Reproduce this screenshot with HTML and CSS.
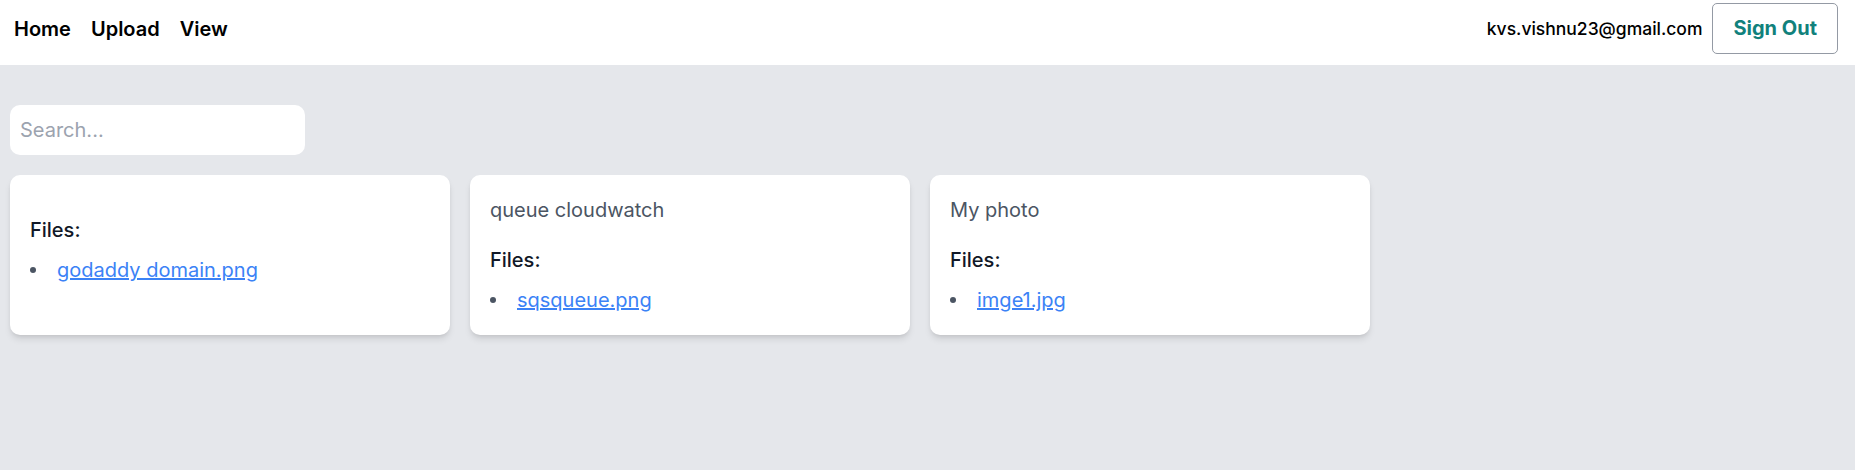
FILE: index.html
```html
<!DOCTYPE html>
<html lang="en">
<head>
<meta charset="utf-8">
<title>Files</title>
<link rel="stylesheet" href="styles.css">
</head>
<body>
<header class="topbar">
  <nav class="nav">
    <a class="nav-link" href="#">Home</a>
    <a class="nav-link" href="#">Upload</a>
    <a class="nav-link" href="#">View</a>
  </nav>
  <div class="account">
    <span class="email">kvs.vishnu23@gmail.com</span>
    <button class="signout">Sign Out</button>
  </div>
</header>
<main class="main">
  <input class="search" type="text" placeholder="Search...">
  <div class="cards">
    <div class="card">
      <p class="card-title"></p>
      <h3 class="files-label">Files:</h3>
      <ul class="file-list">
        <li class="file-item"><a class="file-link" href="#">godaddy domain.png</a></li>
      </ul>
    </div>
    <div class="card">
      <p class="card-title">queue cloudwatch</p>
      <h3 class="files-label">Files:</h3>
      <ul class="file-list">
        <li class="file-item"><a class="file-link" href="#">sqsqueue.png</a></li>
      </ul>
    </div>
    <div class="card">
      <p class="card-title">My photo</p>
      <h3 class="files-label">Files:</h3>
      <ul class="file-list">
        <li class="file-item"><a class="file-link" href="#">imge1.jpg</a></li>
      </ul>
    </div>
  </div>
</main>
</body>
</html>
```

FILE: styles.css
```css
* { box-sizing: border-box; }
html, body {
  margin: 0;
  padding: 0;
  height: 100%;
}
body {
  background: #e5e7eb;
  font-family: Inter, "Noto Sans", sans-serif;
  font-size: 20px;
  line-height: 30px;
  color: #111827;
}
.topbar {
  height: 65px;
  background: #ffffff;
  display: flex;
  justify-content: space-between;
  align-items: center;
  padding: 3px 17px 11px 14px;
}
.nav {
  display: flex;
  gap: 20px;
}
.nav-link {
  color: #000;
  text-decoration: none;
  font-weight: 600;
  font-size: 20px;
  line-height: 30px;
}
.account {
  display: flex;
  align-items: center;
}
.email {
  font-size: 17.5px;
  font-weight: 500;
  color: #000;
  margin-right: 10px;
}
.signout {
  font-family: inherit;
  font-size: 20px;
  font-weight: 700;
  color: #11817c;
  background: #fff;
  border: 1px solid #949aa4;
  border-radius: 5px;
  height: 51px;
  padding: 0 20px;
  line-height: 49px;
}
.main {
  padding: 40px 10px 0 10px;
}
.search {
  display: block;
  width: 295px;
  height: 50px;
  border: none;
  outline: none;
  border-radius: 10px;
  background: #fff;
  padding: 0 10px;
  font-family: inherit;
  font-size: 20px;
  color: #111827;
  margin-bottom: 20px;
}
.search::placeholder {
  color: #9ca3af;
}
.cards {
  display: flex;
  gap: 20px;
  align-items: stretch;
}
.card {
  width: 440px;
  background: #fff;
  border-radius: 10px;
  padding: 20px;
  box-shadow: 0 5px 7.5px -1.25px rgba(0,0,0,0.1), 0 2.5px 5px -2.5px rgba(0,0,0,0.1);
}
.card-title {
  margin: 0 0 20px 0;
  color: #4b5563;
  font-size: 20px;
  line-height: 30px;
}
.files-label {
  margin: 0;
  font-size: 20px;
  line-height: 30px;
  font-weight: 500;
  color: #111827;
}
.file-list {
  list-style: none;
  margin: 10px 0 0 0;
  padding: 0;
}
.file-item {
  display: flex;
  align-items: center;
  line-height: 30px;
}
.file-item::before {
  content: "";
  width: 6px;
  height: 6px;
  border-radius: 50%;
  background: #4b5563;
  margin-right: 21px;
  flex: none;
}
.file-link {
  color: #3b82f6;
  text-decoration: underline;
}
```
